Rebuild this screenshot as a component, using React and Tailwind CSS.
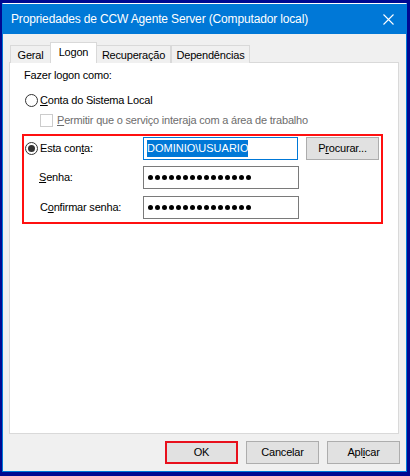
import React from "react";

const font = { fontFamily: '"Liberation Sans", Arial, sans-serif' };

function Radio({ checked }) {
  return (
    <span className="flex h-[13px] w-[13px] items-center justify-center rounded-full border border-[#333333] bg-white">
      {checked && <span className="h-[7px] w-[7px] rounded-full bg-[#333333]" />}
    </span>
  );
}

// senha mascarada: 15 pontos
function Dots() {
  return (
    <span className="flex gap-[2px]">
      {Array.from({ length: 15 }).map((_, i) => (
        <span key={i} className="h-[5px] w-[5px] rounded-full bg-black" />
      ))}
    </span>
  );
}

function Button({ children, red, className = "" }) {
  return (
    <div
      className={
        "flex h-[23px] w-[73px] items-center justify-center bg-[#e1e1e1] text-black " +
        (red ? "border-2 border-[#e8101c] " : "border border-[#adadad] ") +
        className
      }
    >
      {children}
    </div>
  );
}

export default function App() {
  const tabs = [
    { t: "Geral", w: "w-[41px]" },
    { t: "Logon", w: "w-[47px]" },
    { t: "Recuperação", w: "w-[75px]" },
    { t: "Dependências", w: "w-[79px]" },
  ];

  return (
    <div className="h-[476px] w-[410px] bg-[#000891] pb-[4px] pl-[2px] pr-[3px] pt-[3px]" style={font}>
      <div className="flex h-full flex-col border-x border-b border-t border-[#0078d7] border-t-white">
        {/* Barra de título */}
        <div className="flex h-[30px] shrink-0 items-center justify-between bg-[#0078d7] pl-[8px] pr-[12px] text-[12px] tracking-[-0.15px] text-white">
          <span>Propriedades de CCW Agente Server (Computador local)</span>
          <svg width="11" height="11" viewBox="0 0 11 11">
            <path d="M0.5 0.5 L10.5 10.5 M10.5 0.5 L0.5 10.5" stroke="white" strokeWidth="1.1" />
          </svg>
        </div>

        <div className="flex flex-1 flex-col bg-[#f0f0f0] px-[6px] pt-[8px] text-[11px] tracking-[-0.2px]">
          {/* Abas */}
          <div className="relative z-10 flex h-[21px] items-end pl-[1px] text-black">
            {tabs.map(({ t, w }) =>
              t === "Logon" ? (
                <div key={t} className={"-mx-[1px] flex h-[21px] items-center justify-center border-x border-t border-[#d9d9d9] bg-white pb-[1px] " + w}>
                  {t}
                </div>
              ) : (
                <div key={t} className={"flex h-[18px] items-center justify-center border-l border-t border-r border-[#d9d9d9] bg-[#f0f0f0] pt-[1px] " + w}>
                  {t}
                </div>
              )
            )}
          </div>

          {/* Painel */}
          <div className="-mt-[1px] mr-[1px] h-[372px] border border-[#d9d9d9] bg-white pl-[13px] pt-[4px] text-black">
            <div className="flex h-[16px] items-center pl-[1px]">Fazer logon como:</div>

            <div className="mt-[9px] flex h-[16px] items-center gap-[2px] pl-[2px]">
              <Radio />
              <span>
                <u>C</u>onta do Sistema Local
              </span>
            </div>

            <div className="mt-[4px] flex h-[16px] items-center gap-[4px] pl-[17px] text-[#6d6d6d]">
              <span className="h-[13px] w-[13px] border border-[#cccccc] bg-white" />
              <span>
                <u>P</u>ermitir que o serviço interaja com a área de trabalho
              </span>
            </div>

            {/* Área destacada */}
            <div className="mt-[6px] h-[90px] w-[361px] -translate-x-[1px] border-2 border-[#ff1010] pt-[1px]">
              <div className="flex h-[23px] items-center">
                <div className="flex w-[119px] items-center gap-[2px] pl-[1px]">
                  <Radio checked />
                  <span>
                    Esta con<u>t</u>a:
                  </span>
                </div>
                <div className="flex h-[23px] w-[155px] items-center border border-[#0078d7] pl-[3px]">
                  <span className="bg-[#0078d7] tracking-normal text-white">DOMINIO\USUARIO</span>
                </div>
                <Button className="ml-[8px] h-[21px]">
                  <span>
                    P<u>r</u>ocurar...
                  </span>
                </Button>
              </div>

              <div className="mt-[6px] flex h-[23px] items-center">
                <div className="w-[119px] pl-[15px]">
                  <u>S</u>enha:
                </div>
                <div className="flex h-[23px] w-[156px] items-center border border-[#7a7a7a] pl-[4px]">
                  <Dots />
                </div>
              </div>

              <div className="mt-[7px] flex h-[23px] items-center">
                <div className="w-[119px] pl-[16px]">
                  C<u>o</u>nfirmar senha:
                </div>
                <div className="flex h-[23px] w-[156px] items-center border border-[#7a7a7a] pl-[4px]">
                  <Dots />
                </div>
              </div>
            </div>
          </div>

          {/* Botões */}
          <div className="mt-[7px] flex justify-end gap-[8px]">
            <Button red>OK</Button>
            <Button>Cancelar</Button>
            <Button>
              <span>
                Apl<u>i</u>car
              </span>
            </Button>
          </div>
        </div>
      </div>
    </div>
  );
}
